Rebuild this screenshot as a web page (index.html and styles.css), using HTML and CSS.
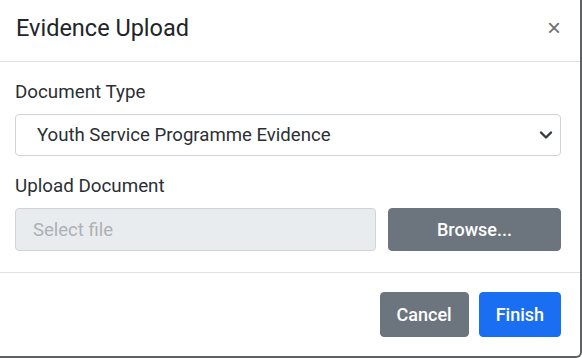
FILE: index.html
```html
<!DOCTYPE html>
<html lang="en">
<head>
    <meta charset="UTF-8">
    <meta name="viewport" content="width=device-width, initial-scale=1.0">
    <title>Evidence Upload</title>
    <link rel="stylesheet" href="styles.css">
</head>
<body>
    <div class="modal-content">
        <div class="modal-header">
            <h5 class="modal-title">Evidence Upload</h5>
            <button type="button" class="btn-close" aria-label="Close">&times;</button>
        </div>

        <div class="modal-body">
            <div class="form-group">
                <label for="doc-type">Document Type</label>
                <div class="select-wrap">
                    <select id="doc-type" class="form-select">
                        <option>Youth Service Programme Evidence</option>
                    </select>
                    <svg class="chevron" width="14" height="10" viewBox="0 0 14 10">
                        <path d="M2 2.5 L7 7.5 L12 2.5" fill="none" stroke="#343a40" stroke-width="2.4" stroke-linecap="round" stroke-linejoin="round"/>
                    </svg>
                </div>
            </div>

            <div class="form-group">
                <label for="doc-file">Upload Document</label>
                <div class="file-row">
                    <input type="text" id="doc-file" class="form-control" placeholder="Select file" disabled>
                    <button type="button" class="btn btn-secondary btn-browse">Browse...</button>
                </div>
            </div>
        </div>

        <div class="modal-footer">
            <button type="button" class="btn btn-secondary">Cancel</button>
            <button type="button" class="btn btn-primary">Finish</button>
        </div>
    </div>
</body>
</html>
```

FILE: styles.css
```css
* {
    box-sizing: border-box;
}
body {
    margin: 0;
    font-family: Roboto, "Liberation Sans", Arial, sans-serif;
    color: #212529;
    background: #fff;
}
.modal-content {
    width: 582px;
    height: 358px;
    border-right: 2px solid #5f6062;
    border-bottom: 2px solid #5f6062;
    border-bottom-right-radius: 6px;
    background: #fff;
}
.modal-header {
    height: 62px;
    display: flex;
    align-items: center;
    justify-content: space-between;
    padding: 0 19px 5px 16px;
    border-bottom: 1px solid #dee2e6;
}
.modal-title {
    margin: 0;
    font-size: 23.5px;
    font-weight: 400;
    color: #212529;
}
.btn-close {
    border: 0;
    background: none;
    padding: 0;
    font-family: Arial, sans-serif;
    font-size: 24px;
    line-height: 1;
    color: #6f6f6f;
}
.modal-body {
    padding: 18px 19px 20px 15px;
    height: 210px;
}
.form-group {
    margin-bottom: 18px;
}
.form-group:last-child {
    margin-bottom: 0;
}
label {
    display: block;
    font-size: 18.8px;
    line-height: 24px;
    margin-bottom: 10px;
    color: #2b2f33;
}
.select-wrap {
    position: relative;
}
.form-select {
    width: 100%;
    height: 42px;
    padding: 0 40px 0 21px;
    font-family: inherit;
    font-size: 18.6px;
    color: #2b2f33;
    background: #fff;
    border: 1px solid #ced4da;
    border-radius: 4px;
    appearance: none;
    -webkit-appearance: none;
}
.chevron {
    position: absolute;
    right: 8px;
    top: 16px;
}
.file-row {
    display: flex;
    gap: 12px;
}
.form-control {
    flex: 1;
    height: 43px;
    padding: 0 17px;
    font-family: inherit;
    font-size: 18.5px;
    background: #e9ecef;
    border: 1px solid #ced4da;
    border-radius: 4px;
}
.form-control::placeholder {
    color: #adb1b5;
}
.btn {
    height: 45px;
    padding: 0 16px;
    font-family: inherit;
    font-size: 18px;
    font-weight: 500;
    color: #fff;
    border: 1px solid transparent;
    border-radius: 4px;
}
.btn-secondary {
    background: #6c757d;
    border-color: #6c757d;
}
.btn-primary {
    background: #1a6ef2;
    border-color: #1a6ef2;
}
.btn-browse {
    width: 173px;
    height: 43px;
}
.modal-footer {
    display: flex;
    justify-content: flex-end;
    gap: 10px;
    padding: 19px 19px 0 0;
    border-top: 1px solid #dee2e6;
}
```
